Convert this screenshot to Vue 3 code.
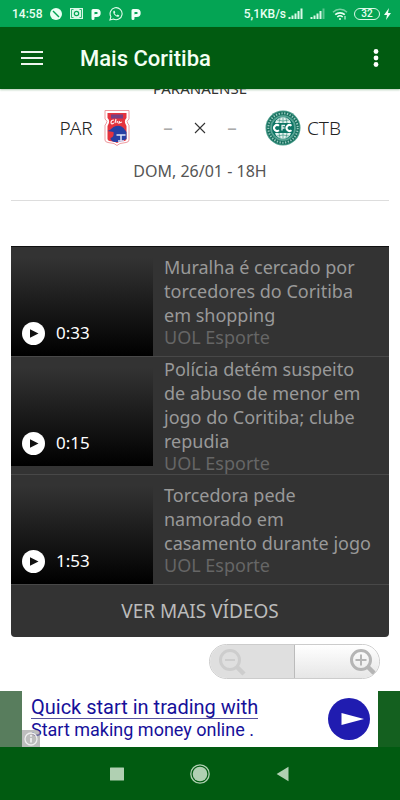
<template>
  <div class="screen">
    <div class="status">
      <span class="clock">14:58</span>
      <svg width="12" height="12" viewBox="0 0 12 12">
        <circle cx="6" cy="6" r="6" fill="#e9fff2" />
        <path d="M3 3l6 6" stroke="#04a454" stroke-width="1.4" />
      </svg>
      <svg class="cash" width="13" height="11" viewBox="0 0 13 11">
        <path d="M0 0h13v11H0z" fill="#d9f8e6" />
        <path d="M3.500 1.500h-2v8h2M9.500 1.500h2v8h-2" fill="none" stroke="#04a454" stroke-width="0.8" />
        <circle cx="6.5" cy="5.5" r="2.2" fill="none" stroke="#04a454" stroke-width="1.2" />
      </svg>
      <svg class="parking" width="10" height="12" viewBox="0 0 10 12">
        <path d="M2 10.500V2.500h3.700a2.500 2.500 0 0 1 0 5H4.500" fill="none" stroke="#f2fff7" stroke-width="3" stroke-linejoin="round" stroke-linecap="round" />
      </svg>
      <svg width="14" height="14" viewBox="0 0 14 14" fill="none" stroke="#e2fbec">
        <path d="M1 13l.9-3.3A6 6 0 1 1 4.3 12z" stroke-width="1.1" />
        <path d="M4.7 3.8c-1.5 1.6.9 5.6 4 6 .9 0 1.6-.6 1.6-1.4L8.6 7.5l-.8.9C6.800 8 6 7.100 5.600 6.200l.7-.8-.7-1.700z" fill="#e2fbec" stroke="none" />
      </svg>
      <svg class="parking" width="10" height="12" viewBox="0 0 10 12">
        <path d="M2 10.500V2.500h3.700a2.500 2.500 0 0 1 0 5H4.500" fill="none" stroke="#f2fff7" stroke-width="3" stroke-linejoin="round" stroke-linecap="round" />
      </svg>
      <span class="speed">5,1KB/s</span>
      <svg v-for="n in 2" :key="n" class="signal" width="16" height="11" viewBox="0 0 16 11">
        <path d="M1.500 11V9M4.500 11V7.500M7.500 11V5.500M10.500 11V3" stroke="#d9f8e6" stroke-width="2" />
        <path d="M13.500 11V0.500" stroke="#d9f8e6" stroke-width="2" :opacity="n === 1 ? 1 : 0.4" />
      </svg>
      <svg class="wifi" width="16" height="12" viewBox="0 0 16 12" fill="none" stroke="#e9fff2">
        <path d="M1 4.200a10 10 0 0 1 14 0" stroke-width="1.500" opacity="0.500" />
        <path d="M3.200 6.700a7 7 0 0 1 9.600 0" stroke-width="1.700" />
        <path d="M5.300 9a4 4 0 0 1 5.400 0" stroke-width="1.600" />
        <circle cx="8" cy="11" r="1" fill="#e9fff2" stroke="none" />
        <path d="M13 8v3.500" stroke-width="1" />
      </svg>
      <span class="battery">32</span>
      <svg width="7" height="12" viewBox="0 0 7 12">
        <path d="M5 0L0 7h3L2 12l5-7H4z" fill="#f2fff7" />
      </svg>
    </div>

    <header class="app-bar">
      <button class="icon-btn" aria-label="Menu">
        <svg width="22" height="16" viewBox="0 0 22 16">
          <path d="M0 2h22M0 8h22M0 14h22" stroke="#eef6ee" stroke-width="2" />
        </svg>
      </button>
      <h1>Mais Coritiba</h1>
      <button class="icon-btn" aria-label="Mais opções">
        <svg width="6" height="18" viewBox="0 0 6 18" fill="#fff">
          <circle cx="3" cy="2.500" r="2.400" />
          <circle cx="3" cy="9" r="2.400" />
          <circle cx="3" cy="15.500" r="2.400" />
        </svg>
      </button>
    </header>

    <main class="content">
      <section class="match">
        <p class="league">PARANAENSE</p>
        <div class="teams">
          <span class="team">PAR</span>
          <svg width="36" height="36" viewBox="0 0 36 36">
            <path d="M6 .5h24V9q-3.500 2-1 5l1 1v15q0 2-3 2.500l-6 1-3 2-3-2-6-1q-3-.5-3-2.500V15l1-1q2.500-3-1-5z" fill="#fff" stroke="#ee9ba0" stroke-width="1" />
            <path d="M8.500 3h19v5q-3 3-.5 7l.5 1v13q0 1.500-2 2l-5 .8-2.500 1.200-2.500-1.200-5-.8q-2-.5-2-2V16l.5-1q2.500-4-.5-7z" fill="#e5333e" />
            <path d="M12 4.500h12v4H12z" fill="#774083" />
            <path d="M15 10q-3 0-3 2.500t3 .5M17 9l-1 4M18.500 11l-.5 2M20.500 11l-.5 2 3-1" fill="none" stroke="#ffe9ea" stroke-width="1.200" />
            <path d="M8.500 21q3-1 6-4 6-3 10 1l3 4v7l-7 3h-5q-4-1-4-4 4-1 3-6z" fill="#263fa4" />
            <path d="M17.500 25h9M22 25v6M19 31h6" stroke="#dfe4f7" stroke-width="1.500" />
          </svg>
          <div class="score">
            <span>–</span>
            <svg width="12" height="12" viewBox="0 0 12 12">
              <path d="M1 1l10 10M11 1L1 11" stroke="#333" stroke-width="1.100" />
            </svg>
            <span>–</span>
          </div>
          <svg width="36" height="36" viewBox="0 0 36 36">
            <circle cx="18" cy="18" r="17.500" fill="#4d9e8c" />
            <circle cx="18" cy="18" r="14.700" fill="none" stroke="#16705f" stroke-width="3.500" />
            <circle cx="18" cy="18" r="14.700" fill="none" stroke="#9acabf" stroke-width="2" stroke-dasharray="1.300 1.500" />
            <circle cx="18" cy="18" r="11.700" fill="#0d7565" stroke="#8ac1b5" stroke-width="0.600" />
            <path d="M10 13q1-5 8-6 7 1 8 6zM10 23q1 5 8 6 7-1 8-6z" fill="#e4f2ef" />
            <path d="M18 7v6M15 8l-1 5M21 8l1 5M18 23v6M14 23l1 5M22 23l-1 5M12 10q6 2 12 0M12 26q6-2 12 0" stroke="#3f9584" stroke-width="0.700" fill="none" />
            <path d="M14 15.700a3 3 0 1 0 0 4.600M26.500 15.700a3 3 0 1 0 0 4.600" fill="none" stroke="#fff" stroke-width="2" />
            <path d="M17 20.500v-5h3M17 18h2.500" fill="none" stroke="#e4f2ef" stroke-width="1.300" />
          </svg>
          <span class="team">CTB</span>
        </div>
        <p class="date">DOM, 26/01 - 18H</p>
      </section>

      <section class="videos">
        <a v-for="video in videos" :key="video.title" href="#" class="video">
          <div class="thumb">
            <svg width="23" height="23" viewBox="0 0 23 23">
              <circle cx="11.500" cy="11.500" r="11.500" fill="#fff" />
              <path d="M8 7.200v8.600l8.500-4.300z" fill="#111" />
            </svg>
            <span>{{ video.time }}</span>
          </div>
          <div class="info">
            <p class="title">{{ video.title }}</p>
            <p class="source">UOL Esporte</p>
          </div>
        </a>
        <button class="more">VER MAIS VÍDEOS</button>
      </section>

      <div class="zoom">
        <button class="zoom-out" aria-label="Diminuir zoom" disabled>
          <svg width="30" height="28" viewBox="0 0 30 28" fill="none" stroke="#cdcdcd">
            <circle cx="12" cy="12" r="9.500" stroke-width="3" />
            <path d="M7 12h10" stroke-width="2" />
            <path d="M19 19l7 7" stroke-width="4.500" />
          </svg>
        </button>
        <button class="zoom-in" aria-label="Aumentar zoom">
          <svg width="30" height="28" viewBox="0 0 30 28" fill="none" stroke="#b5b5b5">
            <circle cx="12" cy="12" r="9.500" stroke-width="3" />
            <path d="M6.500 12h11M12 6.500v11" stroke-width="2" />
            <path d="M19 19l7 7" stroke-width="4.500" />
          </svg>
        </button>
      </div>
    </main>

    <aside class="ad">
      <a href="#" class="ad-box">
        <div class="ad-text">
          <span class="ad-title">Quick start in trading with</span>
          <span class="ad-sub">Start making money online .</span>
        </div>
        <svg class="ad-arrow" width="42" height="42" viewBox="0 0 42 42">
          <circle cx="21" cy="21" r="21" fill="#201cb0" />
          <path d="M13.500 15v12L36 21z" fill="#fff" />
        </svg>
        <svg class="ad-info" width="18" height="17" viewBox="0 0 18 17">
          <path d="M0 0h14q4 0 4 4v13H0z" fill="#9a9a9a" opacity="0.650" />
          <circle cx="9" cy="9" r="6" fill="none" stroke="#eee" stroke-width="1.300" />
          <path d="M9 8v4.500M9 5v1.800" stroke="#eee" stroke-width="1.800" />
        </svg>
      </a>
    </aside>

    <nav class="nav-bar">
      <button aria-label="Recentes">
        <svg width="14" height="14" viewBox="0 0 14 14">
          <rect width="14" height="13" y="0.500" rx="0.500" fill="#b0d0b2" />
        </svg>
      </button>
      <button aria-label="Início">
        <svg width="20" height="20" viewBox="0 0 20 20">
          <circle cx="10" cy="10" r="9.200" fill="none" stroke="#b0d0b2" stroke-width="1.300" />
          <circle cx="10" cy="10" r="7.300" fill="#b0d0b2" />
        </svg>
      </button>
      <button aria-label="Voltar">
        <svg width="14" height="16" viewBox="0 0 14 16">
          <path d="M12.500.8v14.400L.6 8z" fill="#b0d0b2" />
        </svg>
      </button>
    </nav>
  </div>
</template>

<script setup>
import { ref } from "vue";

const videos = ref([
  {
    time: "0:33",
    title: "Muralha é cercado por torcedores do Coritiba em shopping",
  },
  {
    time: "0:15",
    title: "Polícia detém suspeito de abuso de menor em jogo do Coritiba; clube repudia",
  },
  {
    time: "1:53",
    title: "Torcedora pede namorado em casamento durante jogo",
  },
]);
</script>

<style>
body {
  margin: 0;
  background: #fff;
}
</style>

<style scoped>
.screen {
  display: flex;
  flex-direction: column;
  height: 100vh;
  overflow: hidden;
  font-family: "Noto Sans", sans-serif;
}

p,
h1 {
  margin: 0;
}

svg {
  display: block;
  flex-shrink: 0;
}

button {
  padding: 0;
  border: none;
  background: transparent;
  font-family: inherit;
  cursor: pointer;
}

a {
  text-decoration: none;
}

.status {
  display: flex;
  align-items: center;
  flex-shrink: 0;
  gap: 8px;
  height: 27px;
  padding: 0 9px 0 12px;
  background: #04a454;
  color: #e9fff2;
  font-family: Roboto, sans-serif;
  font-size: 12px;
  font-weight: 500;
}

.speed {
  margin-left: auto;
  margin-right: -6px;
}

.signal,
.wifi {
  margin-right: -2px;
}

.battery {
  width: 24px;
  border: 1px solid #d9f8e6;
  border-radius: 6px;
  font-size: 10px;
  line-height: 10px;
  text-align: center;
}

.battery + svg {
  margin-left: -4px;
}

.app-bar {
  display: flex;
  align-items: center;
  flex-shrink: 0;
  height: 62px;
  padding: 0 21px;
  background: #015b11;
  box-shadow: 0 1px 2px rgba(1, 91, 17, 0.3);
  z-index: 1;
}

.app-bar h1 {
  flex: 1;
  margin-left: 37px;
  color: #f4fff4;
  font-family: Roboto, sans-serif;
  font-size: 22px;
  font-weight: 500;
}

.content {
  flex: 1;
  min-height: 0;
  overflow: hidden;
  padding: 0 11px;
}

.match {
  margin-top: -11px;
  padding-bottom: 19px;
  border-bottom: 1px solid #ddd;
  text-align: center;
}

.league {
  color: #333;
  font-size: 15px;
  line-height: 20px;
}

.teams {
  display: flex;
  align-items: center;
  justify-content: center;
  gap: 5px;
  margin-top: 12px;
}

.team {
  width: 36px;
  color: #222;
  font-size: 19px;
  font-weight: 300;
  line-height: 24px;
}

.score {
  display: grid;
  grid-template-columns: repeat(3, 32px);
  align-items: center;
  justify-items: center;
  margin: 0 12px;
  color: #aaa;
  font-size: 19px;
  line-height: 24px;
}

.date {
  margin-top: 15px;
  color: #555;
  font-size: 16px;
  line-height: 20px;
}

.videos {
  margin-top: 45px;
  border-top: 1px solid #111;
  border-radius: 0 0 4px 4px;
  background: #333;
  overflow: hidden;
}

.video {
  display: flex;
  min-height: 109px;
  border-bottom: 1px solid #484848;
}

.thumb {
  display: flex;
  align-items: flex-end;
  flex-shrink: 0;
  gap: 11px;
  width: 142px;
  height: 109px;
  padding: 0 0 11px 11px;
  box-sizing: border-box;
  background: linear-gradient(#333 10%, #000);
  color: #fff;
  font-size: 17px;
  line-height: 24px;
}

.info {
  align-self: center;
  padding: 0 14px 0 11px;
  font-size: 18px;
}

.title {
  color: #999;
  line-height: 24px;
}

.source {
  color: #666;
  line-height: 21px;
}

.more {
  display: block;
  width: 100%;
  height: 52px;
  color: #bbb;
  font-size: 19px;
}

.zoom {
  display: flex;
  width: 171px;
  height: 35px;
  margin: 7px 9px 0 auto;
  border: 1px solid #ccc;
  border-radius: 18px;
  box-sizing: border-box;
  overflow: hidden;
}

.zoom button {
  display: flex;
  align-items: center;
  width: 50%;
  box-sizing: border-box;
}

.zoom-out {
  padding-left: 8px;
  border-right: 1px solid #bbb;
  background: #dfdfdf;
}

.zoom-in {
  justify-content: flex-end;
  background: linear-gradient(#fff, #e6e6e6);
}

.ad {
  flex-shrink: 0;
  padding: 0 22px;
  background: linear-gradient(90deg, #587d5d 22px, #14601f 22px);
}

.ad-box {
  position: relative;
  display: flex;
  align-items: center;
  justify-content: space-between;
  height: 56px;
  padding: 0 8px 0 9px;
  background: #fff;
  color: #16109a;
  font-family: Roboto, sans-serif;
}

.ad-text {
  display: flex;
  flex-direction: column;
  align-items: flex-start;
  align-self: flex-start;
  padding-top: 5px;
}

.ad-title {
  border-bottom: 1px solid #55519c;
  font-size: 20px;
  line-height: 22px;
}

.ad-sub {
  font-size: 18px;
  line-height: 22px;
}

.ad-info {
  position: absolute;
  left: 0;
  bottom: 0;
}

.nav-bar {
  display: flex;
  flex-shrink: 0;
  height: 53px;
  padding: 0 75px;
  background: #015b11;
}

.nav-bar button {
  display: flex;
  align-items: center;
  justify-content: center;
  flex: 1;
}
</style>
